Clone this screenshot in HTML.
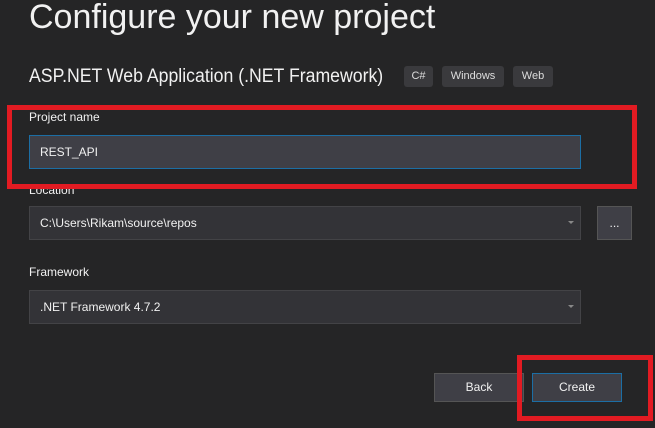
<!DOCTYPE html>
<html><head><style>
body{margin:0;width:655px;height:428px;background:#252526;font-family:"Liberation Sans",sans-serif;color:#f1f1f1;position:relative;overflow:hidden}
.a{position:absolute;white-space:nowrap}
.box{position:absolute;background:#333337;border:1px solid #434346;box-sizing:border-box;font-size:12px;color:#f1f1f1;padding-left:10px;display:flex;align-items:center}
.tag{position:absolute;background:#3a3a3d;border-radius:3px;font-size:11px;color:#ddd;text-align:center;line-height:21px;top:66px;height:21px}
.red{position:absolute;border:5px solid #e21b22;box-sizing:border-box}
.arr{position:absolute;right:6px;top:14px;border-left:3px solid transparent;border-right:3px solid transparent;border-top:3px solid #888}
.lbl{position:absolute;font-size:12px;color:#f1f1f1;left:29px}
.btn{position:absolute;background:#3f3f46;border:1px solid #555;box-sizing:border-box;font-size:12px;text-align:center;line-height:27px;top:373px;height:29px}
</style></head><body>
<div class="a" style="left:29px;top:-2px;font-size:34px;color:#f1f1f1">Configure your new project</div>
<div class="a" style="left:29px;top:66px;font-size:19px;transform:scaleX(0.93);transform-origin:left">ASP.NET Web Application (.NET Framework)</div>
<div class="tag" style="left:404px;width:29px">C#</div>
<div class="tag" style="left:442px;width:62px">Windows</div>
<div class="tag" style="left:513px;width:40px">Web</div>
<div class="lbl" style="top:110px">Project name</div>
<div class="box" style="left:29px;top:135px;width:552px;height:34px;border-color:#1c6ea4;background:#3f3f46">REST_API</div>
<div class="lbl" style="top:183px">Location</div>
<div class="box" style="left:29px;top:206px;width:552px;height:34px">C:\Users\Rikam\source\repos<span class="arr"></span></div>
<div class="box" style="left:597px;top:206px;width:35px;height:34px;padding:0;justify-content:center;background:#3f3f46;border-color:#555">...</div>
<div class="lbl" style="top:265px">Framework</div>
<div class="box" style="left:29px;top:290px;width:552px;height:34px">.NET Framework 4.7.2<span class="arr"></span></div>
<div class="btn" style="left:434px;width:90px">Back</div>
<div class="btn" style="left:532px;width:90px;border-color:#1c6ea4">Create</div>
<div class="red" style="left:7px;top:105px;width:630px;height:84px"></div>
<div class="red" style="left:517px;top:355px;width:136px;height:66px"></div>
</body></html>
